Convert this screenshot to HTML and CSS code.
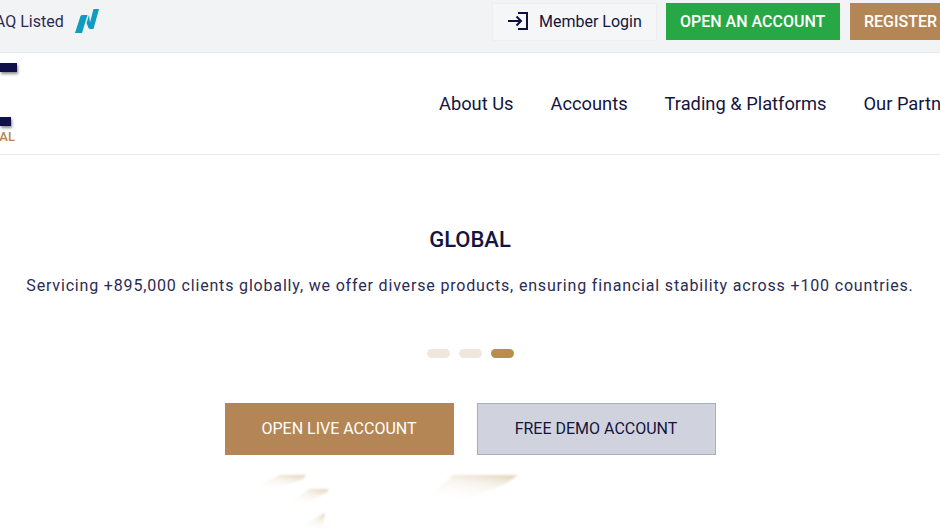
FILE: index.html
```html
<!doctype html>
<html lang="en">
<head>
    <meta charset="utf-8">
    <title>Global</title>
    <link rel="stylesheet" href="styles.css">
</head>
<body>

<div class="page">
    <div class="top-bar">
        <div class="listed">
            <span class="listed-text">NASDAQ Listed</span>
            <svg class="nasdaq-icon" viewBox="0 0 24 24">
                <path fill="#0e9cc0" d="M0 24 L5.500 7 Q6 6 7.500 6 H12.500 L7 24 Z"></path>
                <path fill="#0e9cc0" d="M14 6 L11.500 14 L13.500 19 Q14 20 15.500 20 H18.500 L24 0 H18.500 L15 13.500 Z"></path>
            </svg>
        </div>
        <div class="top-actions">
            <a class="login-btn">
                <svg class="login-icon" viewBox="0 0 21 18">
                    <path fill="none" stroke="#0e0e3f" stroke-width="2" d="M0 9 H13 M8.500 4.500 L13 9 L8.500 13.500 M10 1 H19 V17 H10"></path>
                </svg>
                Member Login
            </a>
            <a class="top-btn green">OPEN AN ACCOUNT</a>
            <a class="top-btn gold">REGISTER</a>
        </div>
    </div>

    <div class="nav-bar">
        <div class="logo">
            <div class="logo-bar first"></div>
            <div class="logo-bar second"></div>
            <div class="logo-text">GLOBAL</div>
        </div>
        <nav class="nav-links">
            <a>About Us</a>
            <a>Accounts</a>
            <a>Trading &amp; Platforms</a>
            <a>Our Partners</a>
        </nav>
    </div>

    <div class="hero">
        <h2>GLOBAL</h2>
        <p>Servicing +895,000 clients globally, we offer diverse products, ensuring financial stability across +100 countries.</p>
        <div class="dots">
            <span class="dot"></span>
            <span class="dot"></span>
            <span class="dot active"></span>
        </div>
        <div class="hero-actions">
            <a class="hero-btn live">OPEN LIVE ACCOUNT</a>
            <a class="hero-btn demo">FREE DEMO ACCOUNT</a>
        </div>
        <svg class="hero-art" viewBox="0 0 300 56">
            <defs>
                <linearGradient id="fade" x1="0.8" y1="0" x2="0.25" y2="1">
                    <stop offset="0" stop-color="#e6d9c2"></stop>
                    <stop offset="0.35" stop-color="#f1eadd" stop-opacity="0.55"></stop>
                    <stop offset="1" stop-color="#ffffff" stop-opacity="0"></stop>
                </linearGradient>
            </defs>
            <path fill="url(#fade)" d="M25 16 L55 1 H81 L78 5 L60 12 Z"></path>
            <path fill="url(#fade)" d="M60 31 L85 15 H104 L102 18 L85 28 Z"></path>
            <path fill="url(#fade)" d="M70 56 L98 40 L100 39 L97 56 Z"></path>
            <path fill="url(#fade)" d="M200 26 L228 1 H293 L282 9 L240 26 Z"></path>
        </svg>
    </div>
</div>

</body>
</html>
```

FILE: styles.css
```css
html, body {
    margin: 0;
    height: 100%;
    overflow: hidden;
}

body {
    font-family: 'Roboto', sans-serif;
    color: #14143f;
    background-color: #fff;
}

.page {
    width: 940px;
    height: 530px;
    overflow: hidden;
}

/* top bar */
.top-bar {
    display: flex;
    justify-content: space-between;
    align-items: flex-start;
    height: 52px;
    background-color: #f2f3f5;
    border-bottom: 1px solid #e9eaec;
}

.listed {
    display: flex;
    flex: none;
    align-items: center;
    height: 42px;
    margin-left: -47px;
    font-size: 16px;
    color: #2a2a55;
}

.nasdaq-icon {
    width: 24px;
    height: 24px;
    margin-left: 11px;
}

.top-actions {
    display: flex;
    flex: none;
    align-items: flex-start;
    width: 448px;
    padding-top: 3px;
    white-space: nowrap;
}

.login-btn {
    display: flex;
    flex: none;
    align-items: center;
    box-sizing: border-box;
    width: 165px;
    height: 38px;
    padding-left: 15px;
    padding-bottom: 2px;
    font-size: 16px;
    background-color: #f5f6f8;
    border: 1px solid #eceef0;
}

.login-icon {
    width: 21px;
    height: 18px;
    margin-right: 10px;
}

.top-btn {
    flex: none;
    box-sizing: border-box;
    height: 37px;
    padding: 0 14px;
    font-size: 16px;
    font-weight: 500;
    line-height: 37px;
    color: #fff;
}

.top-btn.green {
    width: 174px;
    margin-left: 9px;
    background-color: #28a745;
}

.top-btn.gold {
    margin-left: 10px;
    background-color: #b58655;
}

/* nav */
.nav-bar {
    display: flex;
    align-items: center;
    height: 101px;
    border-bottom: 1px solid #e9e9e9;
}

.logo {
    flex: none;
    width: 22px;
    height: 101px;
    overflow: hidden;
}

.logo-bar {
    width: 17px;
    height: 9px;
    background-color: #11114a;
    box-shadow: 1px 2px 3px rgba(0, 0, 0, 0.45);
}

.logo-bar.first {
    margin-top: 10px;
}

.logo-bar.second {
    width: 11px;
    margin-top: 45px;
}

.logo-text {
    width: 15px;
    margin-top: 4px;
    direction: rtl;
    overflow: hidden;
    font-size: 13px;
    font-weight: 500;
    line-height: 14px;
    color: #b58655;
}

.nav-links {
    display: flex;
    flex: none;
    gap: 37px;
    margin-left: 417px;
    font-size: 18.3px;
    white-space: nowrap;
}

/* hero */
.hero {
    text-align: center;
}

.hero h2 {
    margin: 72px 0 0;
    font-size: 22px;
    font-weight: 500;
    line-height: 26px;
}

.hero p {
    margin: 21px 0 0;
    font-size: 16px;
    line-height: 24px;
    letter-spacing: 0.83px;
    color: #2b2b55;
    white-space: nowrap;
}

.dots {
    display: flex;
    justify-content: center;
    gap: 9px;
    margin-top: 51px;
}

.dot {
    width: 23px;
    height: 9px;
    border-radius: 5px;
    background-color: #efe7db;
}

.dot.active {
    background-color: #b78f48;
}

.hero-actions {
    display: flex;
    justify-content: center;
    gap: 23px;
    margin-top: 45px;
}

.hero-btn {
    box-sizing: border-box;
    height: 52px;
    font-size: 16px;
    line-height: 50px;
}

.hero-btn.live {
    width: 229px;
    color: #fff;
    background-color: #b58655;
    border: 1px solid #b58655;
}

.hero-btn.demo {
    width: 239px;
    background-color: #d0d3dd;
    border: 1px solid #a8aebd;
}

.hero-art {
    display: block;
    width: 300px;
    height: 56px;
    margin: 19px 0 0 225px;
    filter: blur(1px);
}
```
